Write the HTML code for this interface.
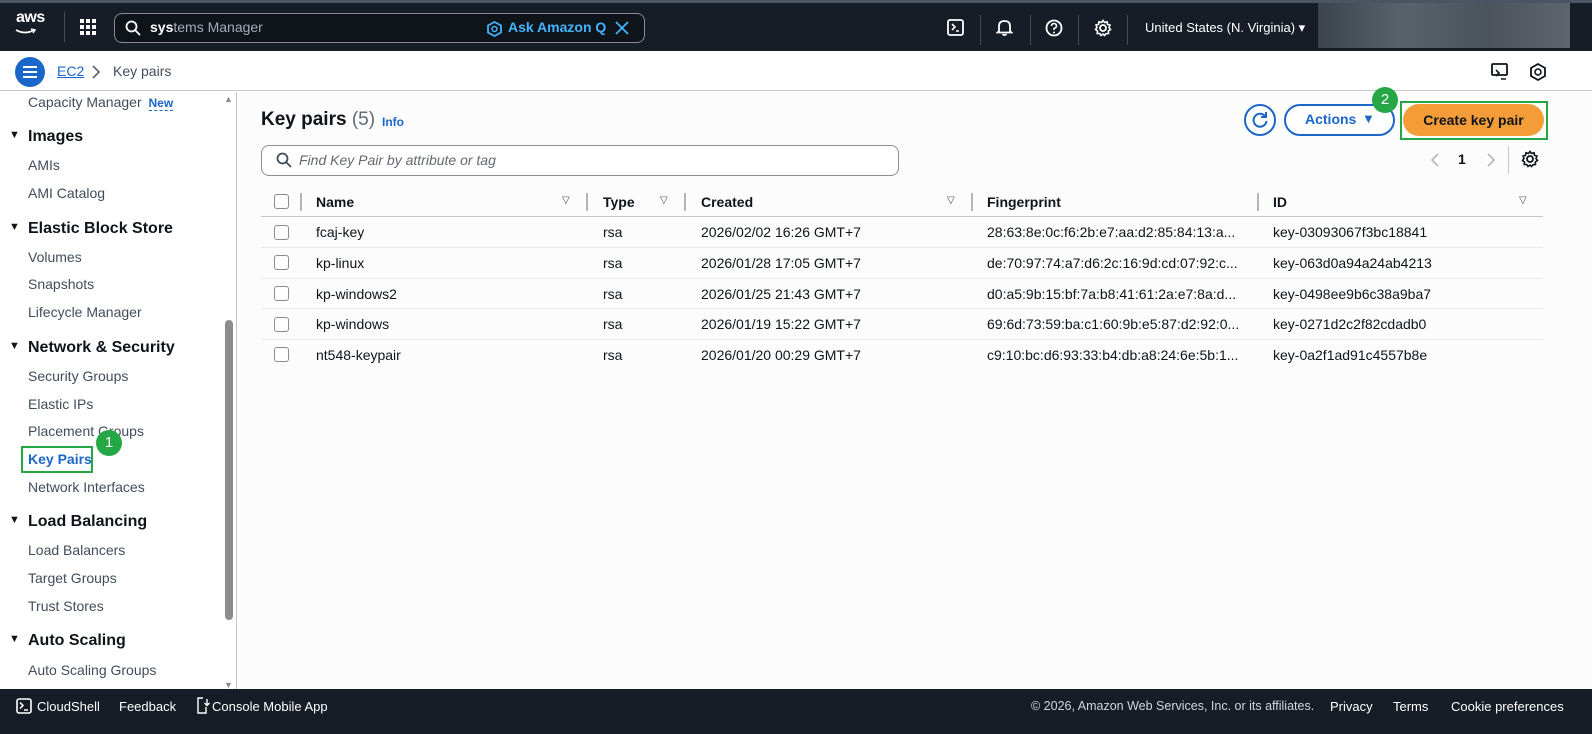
<!DOCTYPE html>
<html><head><meta charset="utf-8"><style>
*{box-sizing:border-box;margin:0;padding:0}
body{width:1592px;height:734px;overflow:hidden;font-family:"Liberation Sans",sans-serif;background:#fff;position:relative;color:#0f141a}
.a{position:absolute;white-space:nowrap}
.top{left:0;top:0;width:1592px;height:51px;background:#161d26;border-top:3px solid #4a5563}
.side{font-size:14px;color:#414d5c;left:28px}
.sh{font-size:16px;font-weight:bold;color:#0f141a;left:28px}
.sh:before{content:"▼";position:absolute;left:-19px;top:1px;font-size:11px}
.th{font-size:14px;font-weight:bold;color:#0f141a;top:194px}
.td{font-size:14px;color:#0f141a}
.cb{width:15px;height:15px;border:1.5px solid #8c8c94;border-radius:3px;background:#fff}
.dv{width:2px;height:18px;background:#b4b4bb;top:193px}
.rl{left:261px;width:1282px;height:1px;background:#e9ebed}
.fi{font-size:10px;color:#414d5c;top:195px}
</style></head><body>
<div class="a top">
 <div class="a" style="left:16px;top:6px;color:#fff;font-size:16px;font-weight:bold;letter-spacing:-0.5px">aws</div>
 <svg class="a" style="left:15px;top:25px" width="22" height="8"><path d="M1 2 Q10 7 19 2" stroke="#fff" stroke-width="1.8" fill="none"/><path d="M16 1 L20 2 L18 5" stroke="#fff" stroke-width="1.5" fill="none"/></svg>
 <div class="a" style="left:64px;top:9px;width:1px;height:30px;background:#414d5c"></div>
 <svg class="a" style="left:80px;top:16px" width="16" height="16" fill="#fff"><rect x="0" y="0" width="4" height="4"/><rect x="6" y="0" width="4" height="4"/><rect x="12" y="0" width="4" height="4"/><rect x="0" y="6" width="4" height="4"/><rect x="6" y="6" width="4" height="4"/><rect x="12" y="6" width="4" height="4"/><rect x="0" y="12" width="4" height="4"/><rect x="6" y="12" width="4" height="4"/><rect x="12" y="12" width="4" height="4"/></svg>
 <div class="a" style="left:114px;top:10px;width:531px;height:30px;border:1.5px solid #8c8c94;border-radius:8px;background:#0f141a"></div>
 <svg class="a" style="left:125px;top:17px" width="16" height="16"><circle cx="6.5" cy="6.5" r="5" stroke="#fff" stroke-width="1.8" fill="none"/><path d="M10 10 L15 15" stroke="#fff" stroke-width="1.8"/></svg>
 <div class="a" style="left:150px;top:16px;font-size:14px;color:#aab"><b style="color:#fff">sys</b>tems Manager</div>
 <svg class="a" style="left:487px;top:18px" width="15" height="16"><path d="M7.5 1 L14 4.5 L14 11.5 L7.5 15 L1 11.5 L1 4.5Z" stroke="#42b4ff" stroke-width="1.8" fill="none"/><circle cx="7.5" cy="8" r="2.5" stroke="#42b4ff" stroke-width="1.5" fill="none"/></svg>
 <div class="a" style="left:508px;top:16px;font-size:14px;font-weight:bold;color:#42b4ff">Ask Amazon Q</div>
 <svg class="a" style="left:615px;top:18px" width="14" height="14"><path d="M1 1L13 13M13 1L1 13" stroke="#42b4ff" stroke-width="1.8"/></svg>
 <svg class="a" style="left:947px;top:16px" width="17" height="17"><rect x="1" y="1" width="15" height="15" rx="2" stroke="#fff" stroke-width="1.8" fill="none"/><path d="M5 5 L8 8 L5 11 M9 12 H12" stroke="#fff" stroke-width="1.6" fill="none"/></svg>
 <div class="a" style="left:980px;top:12px;width:1px;height:30px;background:#414d5c"></div>
 <svg class="a" style="left:996px;top:15px" width="17" height="19"><path d="M3 13 V8 Q3 3 8.5 3 Q14 3 14 8 V13 L15.5 14.5 H1.5Z M6.5 16 Q8.5 18.5 10.5 16" stroke="#fff" stroke-width="1.8" fill="none"/></svg>
 <div class="a" style="left:1030px;top:12px;width:1px;height:30px;background:#414d5c"></div>
 <svg class="a" style="left:1045px;top:16px" width="18" height="18"><circle cx="9" cy="9" r="7.5" stroke="#fff" stroke-width="1.8" fill="none"/><path d="M6.5 7 Q6.5 4.5 9 4.5 Q11.5 4.5 11.5 7 Q11.5 8.5 9 9.5 V11" stroke="#fff" stroke-width="1.6" fill="none"/><circle cx="9" cy="13.5" r="1" fill="#fff"/></svg>
 <div class="a" style="left:1078px;top:12px;width:1px;height:30px;background:#414d5c"></div>
 <svg class="a" style="left:1094px;top:16px" width="18" height="18"><circle cx="9" cy="9" r="3" stroke="#fff" stroke-width="1.8" fill="none"/><path d="M9 1.5 L10.5 3.5 L13 2.8 L13.5 5.3 L16 6 L15 8.5 L16.5 10.5 L14.3 12 L14.5 14.5 L12 14.7 L10.5 16.5 L9 15 L7 16.5 L5.8 14.5 L3.2 14.5 L3.5 12 L1.5 10.5 L3 8.5 L2 6 L4.5 5.3 L5 2.8 L7.5 3.5Z" stroke="#fff" stroke-width="1.6" fill="none"/></svg>
 <div class="a" style="left:1127px;top:12px;width:1px;height:30px;background:#414d5c"></div>
 <div class="a" style="left:1145px;top:17px;font-size:13px;color:#fff">United States (N. Virginia) ▾</div>
 <div class="a" style="left:1318px;top:0;width:252px;height:45px;background:linear-gradient(90deg,#3b434d,#59616b,#4b535c,#5d646c)"></div>
</div>
<div class="a" style="left:0;top:51px;width:1592px;height:40px;background:#fff;border-bottom:1px solid #c6c6cd"></div>
<div class="a" style="left:15px;top:57px;width:30px;height:30px;border-radius:50%;background:#1b66c9"></div>
<svg class="a" style="left:22px;top:65px" width="16" height="14"><path d="M1 2H15M1 7H15M1 12H15" stroke="#fff" stroke-width="2"/></svg>
<div class="a" style="left:57px;top:63px;font-size:14px;color:#1b66c9;text-decoration:underline">EC2</div>
<svg class="a" style="left:91px;top:65px" width="10" height="14"><path d="M2 1 L8 7 L2 13" stroke="#656871" stroke-width="1.8" fill="none"/></svg>
<div class="a" style="left:113px;top:63px;font-size:14px;color:#414d5c">Key pairs</div>
<svg class="a" style="left:1491px;top:63px" width="18" height="18"><rect x="1" y="1" width="15" height="11" rx="1" stroke="#0f141a" stroke-width="1.8" fill="none"/><path d="M5 7 L8 10 L5 13 M10 16 H15" stroke="#0f141a" stroke-width="1.6" fill="none"/></svg>
<svg class="a" style="left:1530px;top:63px" width="16" height="18"><path d="M8 1 L15 5 L15 13 L8 17 L1 13 L1 5Z" stroke="#0f141a" stroke-width="1.8" fill="none"/><circle cx="8" cy="9" r="3" stroke="#0f141a" stroke-width="1.6" fill="none"/></svg>

<!-- sidebar -->
<div class="a" style="left:0;top:92px;width:237px;height:597px;background:#fff;border-right:1px solid #c6c6cd"></div>
<div class="a" style="left:224px;top:680px;font-size:9px;color:#8c8c94">▼</div>
<div class="a" style="left:224px;top:94px;font-size:9px;color:#8c8c94">▲</div>
<div class="a" style="left:225px;top:320px;width:8px;height:300px;border-radius:4px;background:#8d8d8d"></div>
<div class="a side" style="top:94px">Capacity Manager <span style="color:#1b66c9;font-weight:bold;font-size:12px;border-bottom:1px dashed #1b66c9;margin-left:3px">New</span></div>
<div class="a sh" style="top:128px">Images</div>
<div class="a side" style="top:157px">AMIs</div>
<div class="a side" style="top:185px">AMI Catalog</div>
<div class="a sh" style="top:220px">Elastic Block Store</div>
<div class="a side" style="top:249px">Volumes</div>
<div class="a side" style="top:276px">Snapshots</div>
<div class="a side" style="top:304px">Lifecycle Manager</div>
<div class="a sh" style="top:339px">Network &amp; Security</div>
<div class="a side" style="top:368px">Security Groups</div>
<div class="a side" style="top:396px">Elastic IPs</div>
<div class="a side" style="top:423px">Placement Groups</div>
<div class="a side" style="top:451px;color:#1b66c9;font-weight:bold">Key Pairs</div>
<div class="a" style="left:21px;top:446px;width:72px;height:27px;border:2.5px solid #25a745"></div>
<div class="a" style="left:96px;top:430px;width:26px;height:26px;border-radius:50%;background:#25a745;color:#fff;font-size:15px;text-align:center;line-height:26px">1</div>
<div class="a side" style="top:479px">Network Interfaces</div>
<div class="a sh" style="top:513px">Load Balancing</div>
<div class="a side" style="top:542px">Load Balancers</div>
<div class="a side" style="top:570px">Target Groups</div>
<div class="a side" style="top:598px">Trust Stores</div>
<div class="a sh" style="top:632px">Auto Scaling</div>
<div class="a side" style="top:662px">Auto Scaling Groups</div>

<!-- main -->
<div class="a" style="left:238px;top:92px;width:1354px;height:597px;background:#fcfcfd"></div>
<div class="a" style="left:261px;top:109px;font-size:19px;font-weight:bold">Key pairs <span style="font-weight:normal;color:#656871">(5)</span></div>
<div class="a" style="left:382px;top:115px;font-size:12px;font-weight:bold;color:#1b66c9">Info</div>
<div class="a" style="left:1244px;top:104px;width:32px;height:32px;border:2px solid #1b66c9;border-radius:50%;background:#fff"></div>
<svg class="a" style="left:1251px;top:111px" width="18" height="18"><path d="M14 5 A6.5 6.5 0 1 0 15.5 10" stroke="#1b66c9" stroke-width="2" fill="none"/><path d="M15 1 V6 H10" stroke="#1b66c9" stroke-width="2" fill="none"/></svg>
<div class="a" style="left:1284px;top:104px;width:111px;height:32px;border:2px solid #1b66c9;border-radius:16px;background:#fff"></div>
<div class="a" style="left:1305px;top:111px;font-size:14px;font-weight:bold;color:#1b66c9">Actions</div>
<div class="a" style="left:1362px;top:111px;font-size:13px;color:#1b66c9">▼</div>
<div class="a" style="left:1400px;top:101px;width:148px;height:39px;border:2.5px solid #25a745"></div>
<div class="a" style="left:1403px;top:104px;width:141px;height:32px;border-radius:16px;background:#f39c38;font-size:14px;font-weight:bold;text-align:center;line-height:32px">Create key pair</div>
<div class="a" style="left:1372px;top:87px;width:26px;height:26px;border-radius:50%;background:#25a745;color:#fff;font-size:15px;text-align:center;line-height:26px">2</div>

<div class="a" style="left:261px;top:145px;width:638px;height:31px;border:1px solid #8c8c94;border-radius:8px;background:#fff"></div>
<svg class="a" style="left:276px;top:152px" width="16" height="16"><circle cx="6.5" cy="6.5" r="5" stroke="#414d5c" stroke-width="1.8" fill="none"/><path d="M10 10 L15 15" stroke="#414d5c" stroke-width="1.8"/></svg>
<div class="a" style="left:299px;top:152px;font-size:14px;font-style:italic;color:#656871">Find Key Pair by attribute or tag</div>
<svg class="a" style="left:1430px;top:152px" width="10" height="16"><path d="M8 2 L2 8 L8 14" stroke="#b4b4bb" stroke-width="1.6" fill="none"/></svg>
<div class="a" style="left:1458px;top:151px;font-size:14px;font-weight:bold">1</div>
<svg class="a" style="left:1486px;top:152px" width="10" height="16"><path d="M2 2 L8 8 L2 14" stroke="#b4b4bb" stroke-width="1.6" fill="none"/></svg>
<div class="a" style="left:1508px;top:146px;width:1px;height:28px;background:#c6c6cd"></div>
<svg class="a" style="left:1521px;top:150px" width="18" height="18"><circle cx="9" cy="9" r="3" stroke="#0f141a" stroke-width="1.8" fill="none"/><path d="M9 1.5 L10.5 3.5 L13 2.8 L13.5 5.3 L16 6 L15 8.5 L16.5 10.5 L14.3 12 L14.5 14.5 L12 14.7 L10.5 16.5 L9 15 L7 16.5 L5.8 14.5 L3.2 14.5 L3.5 12 L1.5 10.5 L3 8.5 L2 6 L4.5 5.3 L5 2.8 L7.5 3.5Z" stroke="#0f141a" stroke-width="1.6" fill="none"/></svg>

<div class="a cb" style="left:274px;top:194px"></div>
<div class="a dv" style="left:300px"></div>
<div class="a th" style="left:316px">Name</div><div class="a fi" style="left:562px">▽</div>
<div class="a dv" style="left:586px"></div>
<div class="a th" style="left:603px">Type</div><div class="a fi" style="left:660px">▽</div>
<div class="a dv" style="left:684px"></div>
<div class="a th" style="left:701px">Created</div><div class="a fi" style="left:947px">▽</div>
<div class="a dv" style="left:971px"></div>
<div class="a th" style="left:987px">Fingerprint</div>
<div class="a dv" style="left:1257px"></div>
<div class="a th" style="left:1273px">ID</div><div class="a fi" style="left:1519px">▽</div>
<div class="a rl" style="top:216px;background:#c6c6cd"></div>

<div class="a cb" style="left:274px;top:225px"></div><div class="a td" style="left:316px;top:224px">fcaj-key</div><div class="a td" style="left:603px;top:224px">rsa</div><div class="a td" style="left:701px;top:224px">2026/02/02 16:26 GMT+7</div><div class="a td" style="left:987px;top:224px">28:63:8e:0c:f6:2b:e7:aa:d2:85:84:13:a...</div><div class="a td" style="left:1273px;top:224px">key-03093067f3bc18841</div>
<div class="a rl" style="top:247px"></div>
<div class="a cb" style="left:274px;top:255px"></div><div class="a td" style="left:316px;top:255px">kp-linux</div><div class="a td" style="left:603px;top:255px">rsa</div><div class="a td" style="left:701px;top:255px">2026/01/28 17:05 GMT+7</div><div class="a td" style="left:987px;top:255px">de:70:97:74:a7:d6:2c:16:9d:cd:07:92:c...</div><div class="a td" style="left:1273px;top:255px">key-063d0a94a24ab4213</div>
<div class="a rl" style="top:278px"></div>
<div class="a cb" style="left:274px;top:286px"></div><div class="a td" style="left:316px;top:286px">kp-windows2</div><div class="a td" style="left:603px;top:286px">rsa</div><div class="a td" style="left:701px;top:286px">2026/01/25 21:43 GMT+7</div><div class="a td" style="left:987px;top:286px">d0:a5:9b:15:bf:7a:b8:41:61:2a:e7:8a:d...</div><div class="a td" style="left:1273px;top:286px">key-0498ee9b6c38a9ba7</div>
<div class="a rl" style="top:308px"></div>
<div class="a cb" style="left:274px;top:317px"></div><div class="a td" style="left:316px;top:316px">kp-windows</div><div class="a td" style="left:603px;top:316px">rsa</div><div class="a td" style="left:701px;top:316px">2026/01/19 15:22 GMT+7</div><div class="a td" style="left:987px;top:316px">69:6d:73:59:ba:c1:60:9b:e5:87:d2:92:0...</div><div class="a td" style="left:1273px;top:316px">key-0271d2c2f82cdadb0</div>
<div class="a rl" style="top:339px"></div>
<div class="a cb" style="left:274px;top:347px"></div><div class="a td" style="left:316px;top:347px">nt548-keypair</div><div class="a td" style="left:603px;top:347px">rsa</div><div class="a td" style="left:701px;top:347px">2026/01/20 00:29 GMT+7</div><div class="a td" style="left:987px;top:347px">c9:10:bc:d6:93:33:b4:db:a8:24:6e:5b:1...</div><div class="a td" style="left:1273px;top:347px">key-0a2f1ad91c4557b8e</div>

<!-- footer -->
<div class="a" style="left:0;top:689px;width:1592px;height:45px;background:#161d26"></div>
<svg class="a" style="left:16px;top:698px" width="16" height="16"><rect x="1" y="1" width="14" height="14" rx="2" stroke="#fff" stroke-width="1.6" fill="none"/><path d="M4 4.5 L7 7.5 L4 10.5 M8 12 H12" stroke="#fff" stroke-width="1.5" fill="none"/></svg>
<div class="a" style="left:37px;top:699px;font-size:13px;color:#fff">CloudShell</div>
<div class="a" style="left:119px;top:699px;font-size:13px;color:#fff">Feedback</div>
<svg class="a" style="left:196px;top:697px" width="14" height="17"><path d="M7 1 H2 V16 H10 V10 M11 2 V8 M8.5 6 L11 8.5 L13.5 6" stroke="#fff" stroke-width="1.4" fill="none"/></svg>
<div class="a" style="left:212px;top:699px;font-size:13px;color:#fff">Console Mobile App</div>
<div class="a" style="left:1031px;top:699px;font-size:12.5px;color:#d1d5db">© 2026, Amazon Web Services, Inc. or its affiliates.</div>
<div class="a" style="left:1330px;top:699px;font-size:13px;color:#fff">Privacy</div>
<div class="a" style="left:1393px;top:699px;font-size:13px;color:#fff">Terms</div>
<div class="a" style="left:1451px;top:699px;font-size:13px;color:#fff">Cookie preferences</div>
</body></html>
